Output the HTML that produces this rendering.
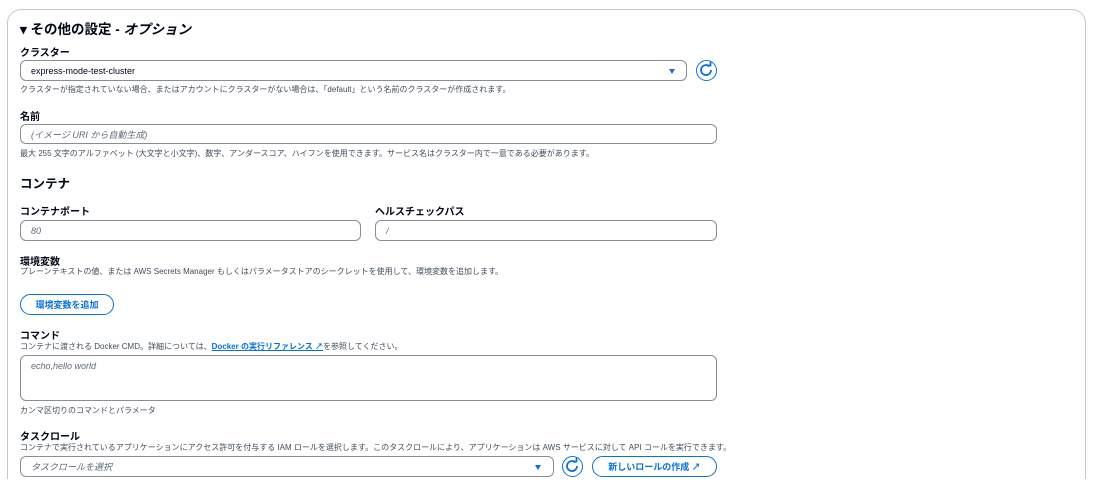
<!DOCTYPE html>
<html><head><meta charset="utf-8"><style>
*{box-sizing:border-box;margin:0;padding:0}
html,body{width:1101px;height:488px;overflow:hidden}
body{background:#fff;font-family:"Liberation Sans","Noto Sans CJK JP",sans-serif;color:#000716;position:relative}
.card{position:absolute;left:7px;top:9px;width:1079px;height:470px;border:1px solid #c6c6cd;border-bottom:none;border-radius:14px 14px 0 0}
.a{position:absolute;white-space:nowrap}
.lbl{font-size:10px;font-weight:bold;color:#000716}
.d{font-size:8px;color:#414d5c}
.in{position:absolute;border:1px solid #8c8c94;border-radius:6px;background:#fff;font-size:9px;padding-left:10px;display:flex;align-items:center}
.ph{font-style:italic;color:#5f6b7a}
.rf{position:absolute;width:21px;height:21px;border:1.5px solid #0972d3;border-radius:50%}
.btn{position:absolute;border:1.5px solid #0972d3;border-radius:12px;color:#0972d3;font-size:9px;font-weight:bold;display:flex;align-items:center;justify-content:center}
.tri{position:absolute;width:0;height:0;border-left:3.5px solid transparent;border-right:3.5px solid transparent;border-top:5px solid #0972d3}
</style></head><body>
<div class="card"></div>
<div class="a" style="left:20px;top:18px;font-size:13.5px;font-weight:bold">▾ その他の設定 - <i>オプション</i></div>
<div class="a lbl" style="left:20px;top:44px">クラスター</div>
<div class="in" style="left:20px;top:60px;width:667px;height:21px">express-mode-test-cluster</div>
<div class="tri" style="left:669px;top:69px"></div>
<div class="rf" style="left:696px;top:60px"><svg width="18" height="18" viewBox="0 0 18 18" style="position:absolute;left:0;top:0"><path d="M12.5 5.5A5 5 0 1 0 14 9" fill="none" stroke="#0972d3" stroke-width="1.8"/><path d="M10 4.5h3.5V1" fill="none" stroke="#0972d3" stroke-width="1.8"/></svg></div>
<div class="a d" style="left:20px;top:84px">クラスターが指定されていない場合、またはアカウントにクラスターがない場合は、「default」という名前のクラスターが作成されます。</div>
<div class="a lbl" style="left:20px;top:108px">名前</div>
<div class="in ph" style="left:20px;top:124px;width:697px;height:20px">(イメージ URI から自動生成)</div>
<div class="a d" style="left:20px;top:148px">最大 255 文字のアルファベット (大文字と小文字)、数字、アンダースコア、ハイフンを使用できます。サービス名はクラスター内で一意である必要があります。</div>
<div class="a" style="left:20px;top:173px;font-size:12.5px;font-weight:bold">コンテナ</div>
<div class="a lbl" style="left:20px;top:203px">コンテナポート</div>
<div class="in ph" style="left:20px;top:220px;width:341px;height:21px">80</div>
<div class="a lbl" style="left:375px;top:203px">ヘルスチェックパス</div>
<div class="in ph" style="left:375px;top:220px;width:342px;height:21px">/</div>
<div class="a lbl" style="left:20px;top:253px">環境変数</div>
<div class="a d" style="left:20px;top:266px">プレーンテキストの値、または AWS Secrets Manager もしくはパラメータストアのシークレットを使用して、環境変数を追加します。</div>
<div class="btn" style="left:20px;top:294px;width:94px;height:21px">環境変数を追加</div>
<div class="a lbl" style="left:20px;top:327px">コマンド</div>
<div class="a d" style="left:20px;top:341px">コンテナに渡される Docker CMD。詳細については、<span style="color:#0972d3;font-weight:bold;text-decoration:underline">Docker の実行リファレンス ↗</span>を参照してください。</div>
<div class="in ph" style="left:20px;top:355px;width:697px;height:46px;align-items:flex-start;padding-top:5px">echo,hello world</div>
<div class="a d" style="left:20px;top:405px">カンマ区切りのコマンドとパラメータ</div>
<div class="a lbl" style="left:20px;top:428px">タスクロール</div>
<div class="a d" style="left:20px;top:442px">コンテナで実行されているアプリケーションにアクセス許可を付与する IAM ロールを選択します。このタスクロールにより、アプリケーションは AWS サービスに対して API コールを実行できます。</div>
<div class="in ph" style="left:20px;top:456px;width:534px;height:21px">タスクロールを選択</div>
<div class="tri" style="left:535px;top:465px"></div>
<div class="rf" style="left:562px;top:456px"><svg width="18" height="18" viewBox="0 0 18 18" style="position:absolute;left:0;top:0"><path d="M12.5 5.5A5 5 0 1 0 14 9" fill="none" stroke="#0972d3" stroke-width="1.8"/><path d="M10 4.5h3.5V1" fill="none" stroke="#0972d3" stroke-width="1.8"/></svg></div>
<div class="btn" style="left:592px;top:456px;width:125px;height:21px">新しいロールの作成 ↗</div>
</body></html>
